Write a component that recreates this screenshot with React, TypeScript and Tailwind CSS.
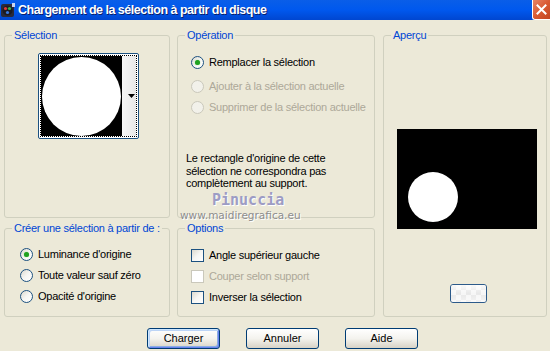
import React from "react";

const font = { fontFamily: '"Liberation Sans", Arial, sans-serif' };

function Radio({ checked = false, disabled = false }: { checked?: boolean; disabled?: boolean }) {
  return (
    <span
      className={
        "relative flex h-[13px] w-[13px] shrink-0 items-center justify-center rounded-full border " +
        (disabled
          ? "border-[#cac8bb] bg-[#f2f1ea]"
          : "border-[#1c5180] bg-linear-to-br from-[#dcd9ce] via-[#f6f6f3] to-white")
      }
    >
      {checked && <span className="h-[5px] w-[5px] rounded-full bg-[#21a121] shadow-[0_0_1px_#5bd35b]" />}
    </span>
  );
}

function Check({ disabled = false }: { disabled?: boolean }) {
  return (
    <span
      className={
        "h-[13px] w-[13px] shrink-0 border " +
        (disabled
          ? "border-[#cac8bb] bg-white"
          : "border-[#1c5180] bg-linear-to-br from-[#dcd9ce] via-[#f6f6f3] to-white")
      }
    />
  );
}

function Row({
  control,
  label,
  disabled = false,
  className = ""
}: {
  control: React.ReactNode;
  label: string;
  disabled?: boolean;
  className?: string;
}) {
  return (
    <div className={"flex h-[13px] items-center gap-[5px] whitespace-nowrap " + className}>
      {control}
      <span className={disabled ? "text-[#aca899]" : "text-black"}>{label}</span>
    </div>
  );
}

function Group({
  title,
  className,
  children
}: {
  title: string;
  className: string;
  children?: React.ReactNode;
}) {
  return (
    <fieldset className={"min-w-0 rounded-[3px] border border-[#d0d0bf] " + className}>
      <legend className="ml-[7px] whitespace-nowrap px-[2px] text-[11px] leading-[13px] text-[#0046d5]">{title}</legend>
      {children}
    </fieldset>
  );
}

function XpButton({ label, main = false }: { label: string; main?: boolean }) {
  return (
    <button
      className={
        "h-[21px] w-[73px] rounded-[3px] border border-[#003c74] bg-linear-to-b from-white via-[#f4f3ee] to-[#d8d3c6] text-[11px] text-black " +
        (main
          ? "shadow-[inset_1px_1px_0_#cee7ff,inset_-1px_-1px_0_#6982ee,inset_2px_2px_0_#bcd4f6,inset_-2px_-2px_0_#89ade4]"
          : "")
      }
    >
      {label}
    </button>
  );
}

export default function App() {
  return (
    <div
      className="relative h-[351px] w-[550px] overflow-hidden bg-[#ece9d8] text-[11px] tracking-[-0.25px]"
      style={font}
    >
      {/* title bar */}
      <div className="flex h-[20px] items-center bg-linear-to-b from-[#0a5ee8] via-[#0058ee] to-[#0046d0]">
        <svg width="14" height="16" viewBox="0 0 14 16" className="ml-[1px] shrink-0">
          <rect x="0" y="2" width="13" height="13" rx="2" fill="#2a2a3a" />
          <circle cx="6.5" cy="8.5" r="5" fill="#1b1b24" />
          <circle cx="4.5" cy="6.5" r="1.6" fill="#e03a3a" />
          <circle cx="8.5" cy="6.5" r="1.6" fill="#39b54a" />
          <circle cx="6.5" cy="10.5" r="1.6" fill="#3a7ae0" />
          <rect x="11" y="1" width="3" height="4" fill="#c9d6f0" />
        </svg>
        <span className="ml-[3px] whitespace-nowrap text-[12.5px] font-bold tracking-[-0.5px] text-white [text-shadow:1px_1px_0_#0a1e6b]">
          Chargement de la sélection à partir du disque
        </span>
        <div className="ml-auto flex h-[20px] w-[18px] items-center justify-center self-start rounded-bl-[3px] border-b border-l border-white bg-linear-to-br from-[#e88466] via-[#d95a32] to-[#c24520]">
          <svg width="11" height="11" viewBox="0 0 11 11">
            <path d="M1.5 1.5 L9.5 9.5 M9.5 1.5 L1.5 9.5" stroke="white" strokeWidth="2" strokeLinecap="square" />
          </svg>
        </div>
      </div>

      {/* groups */}
      <div className="flex pl-[4px] pt-[9px]">
        <div className="flex w-[166px] flex-col gap-[4px]">
          <Group title="Sélection" className="h-[189px]">
            <div className="ml-[33px] mt-[11px] flex h-[86px] w-[101px] rounded-[2px] border border-[#1c5180] bg-white p-[1px]">
              <div className="flex h-full w-full border border-dotted border-black">
                <div className="flex h-[80px] w-[81px] items-center justify-center bg-black">
                  <div className="h-[79px] w-[79px] rounded-full bg-white" />
                </div>
                <div className="flex flex-1 items-center justify-end bg-linear-to-r from-[#f7f7f7] to-[#e8e8e8] pr-[1px]">
                  <svg width="7" height="4" viewBox="0 0 7 4">
                    <path d="M0 0 H7 L3.5 4 Z" fill="black" />
                  </svg>
                </div>
              </div>
            </div>
          </Group>
          <Group title="Créer une sélection à partir de :" className="h-[95px]">
            <div className="flex flex-col gap-[8px] pl-[15px] pt-[13px]">
              <Row control={<Radio checked />} label="Luminance d'origine" />
              <Row control={<Radio />} label="Toute valeur sauf zéro" />
              <Row control={<Radio />} label="Opacité d'origine" />
            </div>
          </Group>
        </div>

        <div className="ml-[7px] flex w-[198px] flex-col gap-[4px]">
          <Group title="Opération" className="h-[189px]">
            <div className="pl-[8px]">
              <Row className="ml-[5px] mt-[14px]" control={<Radio checked />} label="Remplacer la sélection" />
              <Row className="ml-[5px] mt-[11px]" control={<Radio disabled />} label="Ajouter à la sélection actuelle" disabled />
              <Row className="ml-[5px] mt-[8px]" control={<Radio disabled />} label="Supprimer de la sélection actuelle" disabled />
              <p className="mt-[38px] whitespace-nowrap leading-[12.5px] text-black">
                Le rectangle d'origine de cette
                <br />
                sélection ne correspondra pas
                <br />
                complètement au support.
              </p>
            </div>
          </Group>
          <Group title="Options" className="h-[95px]">
            <div className="flex flex-col gap-[8px] pl-[13px] pt-[14px]">
              <Row control={<Check />} label="Angle supérieur gauche" />
              <Row control={<Check disabled />} label="Couper selon support" disabled />
              <Row control={<Check />} label="Inverser la sélection" />
            </div>
          </Group>
        </div>

        <div className="ml-[8px] w-[164px]">
          <Group title="Aperçu" className="h-[288px]">
            <div className="flex flex-col pl-[13px]">
              <div className="relative mt-[87px] h-[100px] w-[140px] bg-black">
                <div className="absolute left-[11px] top-[43px] h-[50px] w-[50px] rounded-full bg-white" />
              </div>
              <div className="ml-[53px] mt-[55px] h-[19px] w-[37px] overflow-hidden rounded-[3px] border border-[#2c5a8a] bg-[repeating-conic-gradient(#f4f4f4_0%_25%,#e2e2e2_0%_50%)] bg-[length:10px_10px]">
                <div className="h-full w-full bg-linear-to-b from-white/80 via-white/20 to-white/60" />
              </div>
            </div>
          </Group>
        </div>
      </div>

      {/* buttons */}
      <div className="mt-[11px] flex gap-[26px] pl-[147px] tracking-normal">
        <XpButton label="Charger" main />
        <XpButton label="Annuler" />
        <XpButton label="Aide" />
      </div>

      {/* watermark over the dialog */}
      <div className="pointer-events-none absolute left-[180px] top-[191px] flex flex-col items-start tracking-normal">
        <span
          className="ml-[32px] text-[15px] font-bold leading-[18px] text-[#9d9cc4] [text-shadow:1px_1px_0_#ffffff]"
          style={{ fontFamily: '"DejaVu Sans Mono", monospace' }}
        >
          Pinuccia
        </span>
        <span
          className="text-[10.5px] leading-[12px] text-[#8d8d8d] [text-shadow:1px_1px_0_#ffffff]"
          style={{ fontFamily: '"DejaVu Sans", Verdana, sans-serif' }}
        >
          www.maidiregrafica.eu
        </span>
      </div>
    </div>
  );
}
